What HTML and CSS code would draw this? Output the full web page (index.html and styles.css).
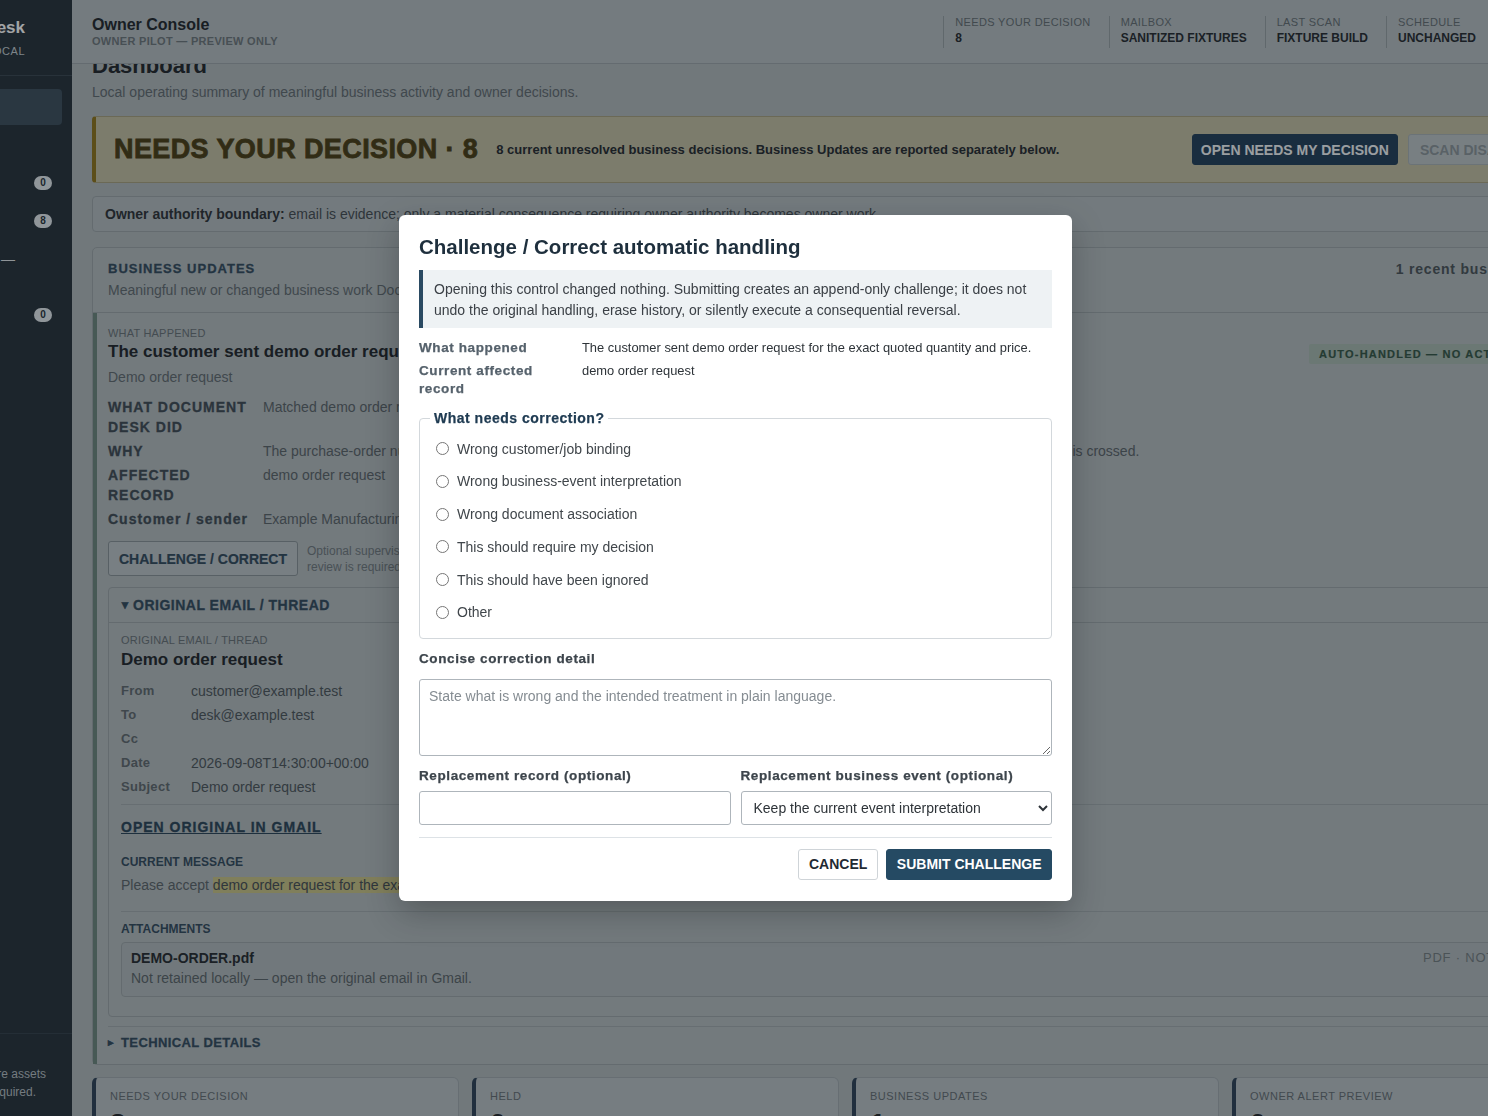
FILE: index.html
```html
<!DOCTYPE html>
<html lang="en">
<head>
<meta charset="utf-8">
<title>Owner Console — Dashboard</title>
<link rel="stylesheet" href="styles.css">
</head>
<body>
<div class="app">
  <aside class="sidebar">
    <div class="sidebar-inner">
      <div class="brand">
        <div class="brand-name">Document Desk</div>
        <div class="brand-sub">Owner pilot · local</div>
      </div>
      <nav class="nav">
        <a class="nav-item active"><span>Dashboard</span></a>
        <a class="nav-item"><span>Business updates</span></a>
        <a class="nav-item"><span>Held</span><span class="badge">0</span></a>
        <a class="nav-item"><span>Needs my decision</span><span class="badge">8</span></a>
        <a class="nav-item"><span>Mailbox</span><span class="nav-dash">—</span></a>
        <a class="nav-item group-start"><span>Owner alerts</span><span class="badge">0</span></a>
      </nav>
      <div class="sidebar-foot">
        <span class="foot-line">Runs on sanitized fixture assets</span>
        <span class="foot-line foot-line-short">— no mailbox access is required.</span>
      </div>
    </div>
  </aside>

  <div class="main">
    <header class="topbar">
      <div class="topbar-title">
        <div class="app-title">Owner Console</div>
        <div class="app-sub">Owner pilot — preview only</div>
      </div>
      <dl class="stats">
        <div class="stat"><dt>Needs your decision</dt><dd>8</dd></div>
        <div class="stat"><dt>Mailbox</dt><dd>Sanitized fixtures</dd></div>
        <div class="stat"><dt>Last scan</dt><dd>Fixture build</dd></div>
        <div class="stat"><dt>Schedule</dt><dd>Unchanged</dd></div>
      </dl>
    </header>

    <div class="viewport">
      <div class="content">
        <h1 class="page-title">Dashboard</h1>
        <p class="page-desc">Local operating summary of meaningful business activity and owner decisions.</p>

        <section class="decision-banner">
          <h2 class="decision-title">NEEDS YOUR DECISION · 8</h2>
          <p class="decision-text">8 current unresolved business decisions. Business Updates are reported separately below.</p>
          <div class="decision-actions">
            <button class="btn btn-primary" type="button">OPEN NEEDS MY DECISION</button>
            <button class="btn btn-muted" type="button" disabled>SCAN DISABLED</button>
          </div>
        </section>

        <p class="boundary"><strong>Owner authority boundary:</strong> email is evidence; only a material consequence requiring owner authority becomes owner work.</p>

        <section class="card">
          <header class="card-head">
            <div>
              <h2 class="section-title">BUSINESS UPDATES</h2>
              <p class="section-sub">Meaningful new or changed business work Document Desk recorded since your last review. Nothing here needs your decision.</p>
            </div>
            <span class="card-count">1 recent business update</span>
          </header>

          <article class="update">
            <div class="update-head">
              <div>
                <div class="eyebrow">WHAT HAPPENED</div>
                <h3 class="update-title">The customer sent demo order request for the exact quoted quantity and price.</h3>
                <div class="update-sub">Demo order request</div>
              </div>
              <span class="pill">AUTO-HANDLED — NO ACTION NEEDED</span>
            </div>

            <dl class="facts">
              <dt>WHAT DOCUMENT DESK DID</dt>
              <dd>Matched demo order request to the accepted quotation and recorded the order.</dd>
              <dt>WHY</dt>
              <dd>The purchase-order number, quantity and price matched the accepted quote, so no owner decision is needed unless the threshold is crossed.</dd>
              <dt>AFFECTED RECORD</dt>
              <dd>demo order request</dd>
              <dt>Customer / sender</dt>
              <dd>Example Manufacturing Co. — customer@example.test</dd>
            </dl>

            <div class="update-actions">
              <button class="btn btn-outline" type="button">CHALLENGE / CORRECT</button>
              <p class="action-note">Optional supervisory check — this was handled automatically and no owner review is required for it.</p>
            </div>

            <details class="thread" open>
              <summary>ORIGINAL EMAIL / THREAD</summary>
              <div class="thread-body">
                <div class="eyebrow">ORIGINAL EMAIL / THREAD</div>
                <h4 class="thread-title">Demo order request</h4>
                <dl class="mail-headers">
                  <dt>From</dt><dd>customer@example.test</dd>
                  <dt>To</dt><dd>desk@example.test</dd>
                  <dt>Cc</dt><dd></dd>
                  <dt>Date</dt><dd>2026-09-08T14:30:00+00:00</dd>
                  <dt>Subject</dt><dd>Demo order request</dd>
                </dl>
                <div class="thread-link"><a href="#">OPEN ORIGINAL IN GMAIL</a></div>
                <div class="msg-label">CURRENT MESSAGE</div>
                <p class="msg">Please accept <mark>demo order request for the exact quoted quantity and price.</mark></p>
                <div class="attachments">
                  <div class="msg-label msg-label-tight">ATTACHMENTS</div>
                  <div class="attachment">
                    <div class="attachment-info">
                      <strong>DEMO-ORDER.pdf</strong>
                      <span>Not retained locally — open the original email in Gmail.</span>
                    </div>
                    <span class="attachment-meta">PDF · NOT CACHED</span>
                  </div>
                </div>
              </div>
            </details>

            <details class="tech">
              <summary>TECHNICAL DETAILS</summary>
            </details>
          </article>
        </section>

        <section class="summary-grid">
          <div class="summary-card"><div class="summary-label">NEEDS YOUR DECISION</div><div class="summary-value">8</div></div>
          <div class="summary-card"><div class="summary-label">HELD</div><div class="summary-value">0</div></div>
          <div class="summary-card"><div class="summary-label">BUSINESS UPDATES</div><div class="summary-value">1</div></div>
          <div class="summary-card"><div class="summary-label">OWNER ALERT PREVIEW</div><div class="summary-value">0</div></div>
        </section>
      </div>
    </div>
  </div>
</div>

<div class="backdrop">
  <div class="modal" role="dialog" aria-modal="true" aria-labelledby="modal-title">
    <h2 class="modal-title" id="modal-title">Challenge / Correct automatic handling</h2>
    <p class="modal-note">Opening this control changed nothing. Submitting creates an append-only challenge; it does not undo the original handling, erase history, or silently execute a consequential reversal.</p>
    <dl class="modal-facts">
      <dt>What happened</dt>
      <dd>The customer sent demo order request for the exact quoted quantity and price.</dd>
      <dt>Current affected record</dt>
      <dd>demo order request</dd>
    </dl>
    <fieldset class="choices">
      <legend>What needs correction?</legend>
      <label class="choice"><input type="radio" name="reason"> Wrong customer/job binding</label>
      <label class="choice"><input type="radio" name="reason"> Wrong business-event interpretation</label>
      <label class="choice"><input type="radio" name="reason"> Wrong document association</label>
      <label class="choice"><input type="radio" name="reason"> This should require my decision</label>
      <label class="choice"><input type="radio" name="reason"> This should have been ignored</label>
      <label class="choice"><input type="radio" name="reason"> Other</label>
    </fieldset>
    <label class="field-label field-label-first" for="detail">Concise correction detail</label>
    <textarea id="detail" class="textarea" placeholder="State what is wrong and the intended treatment in plain language."></textarea>
    <div class="field-row">
      <div class="field">
        <label class="field-label" for="record">Replacement record (optional)</label>
        <input id="record" class="input" type="text">
      </div>
      <div class="field">
        <label class="field-label" for="event">Replacement business event (optional)</label>
        <select id="event" class="input select">
          <option>Keep the current event interpretation</option>
        </select>
      </div>
    </div>
    <div class="modal-actions">
      <button class="btn btn-cancel" type="button">CANCEL</button>
      <button class="btn btn-submit" type="button">SUBMIT CHALLENGE</button>
    </div>
  </div>
</div>
</body>
</html>
```

FILE: styles.css
```css
* { box-sizing: border-box; }

html, body {
  margin: 0;
  height: 100%;
}

body {
  font-family: "Liberation Sans", Arial, sans-serif;
  font-size: 14px;
  color: #2e3338;
  background: #b0b8ba;
  overflow: hidden;
}

button, input, select, textarea {
  font-family: inherit;
}

.app {
  display: flex;
  height: 100vh;
  overflow: hidden;
}

/* ---------- sidebar ---------- */
.sidebar {
  flex: 0 0 72px;
  width: 72px;
  background: #27333b;
  overflow: hidden;
}

.sidebar-inner {
  width: 240px;
  margin-left: -168px;
  height: 100%;
  display: flex;
  flex-direction: column;
}

.brand {
  padding: 17px 47px 17px 18px;
  text-align: right;
  border-bottom: 1px solid #3a4852;
}

.brand-name {
  font-size: 17px;
  font-weight: bold;
  line-height: 22px;
  color: #ffffff;
}

.brand-sub {
  margin-top: 5px;
  font-size: 11px;
  line-height: 14px;
  letter-spacing: 0.5px;
  text-transform: uppercase;
  color: #c2cbd0;
}

.nav {
  display: flex;
  flex-direction: column;
  gap: 2px;
  padding: 13px 10px 0;
}

.nav-item {
  display: flex;
  align-items: center;
  justify-content: space-between;
  height: 36px;
  padding: 0 10px 0 12px;
  border-radius: 4px;
  color: #c8d1d6;
  font-size: 14px;
}

.nav-item.active { background: #3e4f5c; }
.nav-item.group-start { margin-top: 18px; }

.badge {
  min-width: 18px;
  height: 14px;
  padding: 0 5px;
  border-radius: 7px;
  background: #e3e9ec;
  color: #27333b;
  font-size: 10px;
  font-weight: bold;
  line-height: 14px;
  text-align: center;
}

.nav-dash {
  margin-right: 37px;
  color: #e0e6e9;
}

.sidebar-foot {
  margin-top: auto;
  border-top: 1px solid #35424b;
  padding: 31px 26px 15px 10px;
  text-align: right;
  font-size: 12px;
  line-height: 18px;
  color: #b5bdc1;
}

.foot-line { display: block; white-space: nowrap; }
.foot-line-short { padding-right: 10px; }

/* ---------- main ---------- */
.main {
  flex: 1 1 auto;
  min-width: 0;
  display: flex;
  flex-direction: column;
  overflow: hidden;
}

.topbar {
  flex: 0 0 64px;
  height: 64px;
  display: flex;
  justify-content: space-between;
  align-items: flex-start;
  padding: 15px 0 0 20px;
  background: #b5bdc0;
  border-bottom: 1px solid #9ba4a8;
}

.app-title {
  font-size: 16px;
  font-weight: bold;
  line-height: 20px;
  color: #22272c;
}

.app-sub {
  margin-top: -1px;
  font-size: 11px;
  font-weight: bold;
  letter-spacing: 0.3px;
  line-height: 14px;
  text-transform: uppercase;
  color: #6d767b;
}

.stats {
  display: flex;
  margin: 1px 0 0;
}

.stat {
  border-left: 1px solid #959ea2;
  padding: 0 18px 2px 11px;
}

.stat:last-child { padding-right: 12px; }

.stat dt {
  font-size: 11px;
  line-height: 13px;
  letter-spacing: 0.35px;
  text-transform: uppercase;
  color: #646d72;
}

.stat dd {
  margin: 1px 0 0;
  font-size: 12px;
  font-weight: bold;
  line-height: 16px;
  text-transform: uppercase;
  color: #262b30;
}

.viewport {
  flex: 1 1 auto;
  overflow: hidden;
}

.content {
  width: 1547px;
  padding: 0 20px;
  margin-top: -12px;
}

.page-title {
  margin: 0;
  font-size: 22px;
  line-height: 28px;
  font-weight: bold;
  color: #22272c;
}

.page-desc {
  margin: 2px 0 0;
  font-size: 14px;
  line-height: 20px;
  color: #626b70;
}

/* decision banner */
.decision-banner {
  margin-top: 14px;
  display: flex;
  align-items: center;
  padding: 15px 51px 15px 18px;
  background: #c2bea2;
  border: 1px solid #a7a07f;
  border-left: 4px solid #8f741c;
  border-radius: 4px;
}

.decision-title {
  margin: 0;
  font-size: 27px;
  line-height: 35px;
  font-weight: bold;
  letter-spacing: 0.4px;
  color: #4a3e16;
  -webkit-text-stroke: 0.8px #4a3e16;
  white-space: nowrap;
}

.decision-text {
  flex: 1 1 auto;
  margin: 0 0 0 18px;
  font-size: 13px;
  font-weight: bold;
  line-height: 18px;
  color: #262b30;
}

.decision-actions {
  display: flex;
  gap: 10px;
}

.btn {
  height: 31px;
  border-radius: 3px;
  font-size: 14px;
  font-weight: bold;
  white-space: nowrap;
  cursor: pointer;
}

.btn-primary {
  padding: 0 8px;
  background: #23405a;
  border: 1px solid #23405a;
  color: #f2f5f7;
}

.btn-muted {
  padding: 0 11px;
  background: #bcc4c6;
  border: 1px solid #a7b0b3;
  color: #8a9498;
}

.boundary {
  margin: 13px 0 0;
  padding: 7px 12px;
  line-height: 20px;
  font-size: 14px;
  color: #454d52;
  background: #b4bcbf;
  border: 1px solid #9ba4a7;
  border-radius: 4px;
}

.boundary strong { color: #2e3338; }

/* business updates card */
.card {
  margin-top: 15px;
  background: #b3bbbd;
  border: 1px solid #9ba4a7;
  border-radius: 5px;
}

.card-head {
  display: flex;
  justify-content: space-between;
  align-items: flex-start;
  padding: 12px 15px;
  border-bottom: 1px solid #9ba4a7;
}

.section-title {
  margin: 0;
  font-size: 13px;
  line-height: 18px;
  font-weight: bold;
  letter-spacing: 1px;
  color: #334b5d;
  -webkit-text-stroke: 0.3px #334b5d;
}

.section-sub {
  margin: 2px 0 0;
  font-size: 14px;
  line-height: 20px;
  color: #626b70;
}

.card-count {
  font-size: 14px;
  line-height: 18px;
  font-weight: bold;
  letter-spacing: 0.8px;
  color: #4b5459;
  white-space: nowrap;
}

.update {
  border-left: 4px solid #6c877d;
  padding: 13px 16px 11px 11px;
}

.update-head {
  display: flex;
  justify-content: space-between;
  align-items: flex-start;
}

.eyebrow {
  font-size: 11px;
  line-height: 14px;
  letter-spacing: 0.2px;
  color: #687176;
}

.update-title {
  margin: 1px 0 0;
  font-size: 17px;
  line-height: 22px;
  font-weight: bold;
  color: #22272c;
}

.update-sub {
  margin-top: 4px;
  font-size: 14px;
  line-height: 20px;
  color: #626b70;
}

.pill {
  margin-top: 18px;
  padding: 0 10px;
  height: 20px;
  line-height: 20px;
  background: #a7b8ae;
  color: #345646;
  font-size: 11px;
  font-weight: bold;
  letter-spacing: 1.2px;
  border-radius: 2px;
  white-space: nowrap;
  -webkit-text-stroke: 0.2px #345646;
}

.facts {
  display: grid;
  grid-template-columns: 143px 1fr;
  column-gap: 12px;
  row-gap: 4px;
  margin: 10px 0 0;
}

.facts dt {
  font-size: 14px;
  line-height: 20px;
  font-weight: bold;
  letter-spacing: 1px;
  color: #3f4b54;
  -webkit-text-stroke: 0.3px #3f4b54;
}

.facts dd {
  margin: 0;
  font-size: 14px;
  line-height: 20px;
  color: #5b6469;
}

.update-actions {
  display: flex;
  align-items: center;
  gap: 9px;
  margin-top: 12px;
}

.btn-outline {
  height: 35px;
  padding: 0 10px;
  background: #bcc4c7;
  border: 1px solid #889296;
  color: #334b5d;
  -webkit-text-stroke: 0.2px #334b5d;
}

.action-note {
  margin: 0;
  max-width: 415px;
  font-size: 12px;
  line-height: 16px;
  color: #70797e;
}

.thread {
  margin-top: 11px;
  border: 1px solid #9ba4a7;
  border-radius: 4px;
}

.thread > summary,
.tech > summary {
  display: block;
  list-style: none;
  cursor: pointer;
  font-weight: bold;
  color: #334b5d;
  -webkit-text-stroke: 0.3px #334b5d;
}

.thread > summary::-webkit-details-marker,
.tech > summary::-webkit-details-marker { display: none; }

.thread > summary {
  padding: 7px 10px;
  font-size: 14px;
  line-height: 20px;
  letter-spacing: 0.5px;
  border-bottom: 1px solid #9ba4a7;
}

.thread > summary::before {
  content: "▼";
  display: inline-block;
  width: 14px;
  font-size: 12px;
  vertical-align: 1px;
}

.thread-body {
  padding: 10px 12px 19px;
}

.thread-title {
  margin: 2px 0 0;
  font-size: 17px;
  line-height: 22px;
  font-weight: bold;
  color: #22272c;
}

.mail-headers {
  display: grid;
  grid-template-columns: 70px 1fr;
  margin: 8px 0 0;
  padding-bottom: 5px;
  border-bottom: 1px solid #a0a9ac;
}

.mail-headers dt {
  font-size: 13px;
  line-height: 24px;
  font-weight: bold;
  letter-spacing: 0.3px;
  color: #5f696e;
}

.mail-headers dd {
  margin: 0;
  font-size: 14px;
  line-height: 24px;
  color: #4d565b;
}

.thread-link {
  margin-top: 12px;
  line-height: 20px;
}

.thread-link a {
  font-size: 14px;
  font-weight: bold;
  letter-spacing: 1px;
  color: #2a4457;
  text-decoration: underline;
  -webkit-text-stroke: 0.3px #2a4457;
}

.msg-label {
  margin-top: 17px;
  font-size: 12px;
  line-height: 16px;
  font-weight: bold;
  color: #334b5d;
}

.msg-label-tight { margin-top: 0; }

.msg {
  margin: 5px 0 0;
  font-size: 14px;
  line-height: 20px;
  color: #5b6469;
}

.msg mark {
  background: #c9c386;
  color: #474f54;
}

.attachments {
  margin-top: 16px;
  border-top: 1px solid #a0a9ac;
  padding-top: 9px;
}

.attachment {
  margin-top: 5px;
  display: flex;
  justify-content: space-between;
  align-items: flex-start;
  padding: 5px 9px 8px;
  border: 1px solid #9ba4a7;
  border-radius: 4px;
  background: #b1b9bb;
}

.attachment-info strong {
  display: block;
  font-size: 14px;
  line-height: 20px;
  color: #262b30;
}

.attachment-info span {
  display: block;
  font-size: 14px;
  line-height: 20px;
  color: #5b6469;
}

.attachment-meta {
  font-size: 13px;
  line-height: 20px;
  letter-spacing: 0.8px;
  color: #737c80;
}

.tech {
  margin-top: 9px;
  border-top: 1px solid #a0a9ac;
  padding-top: 6px;
}

.tech > summary {
  font-size: 13px;
  line-height: 20px;
  letter-spacing: 0.4px;
}

.tech > summary::before {
  content: "▶";
  display: inline-block;
  width: 13px;
  font-size: 7px;
  vertical-align: 2px;
}

/* summary stats */
.summary-grid {
  margin-top: 12px;
  display: grid;
  grid-template-columns: repeat(4, 1fr);
  gap: 13px;
}

.summary-card {
  padding: 11px 14px 14px;
  background: #b8c0c4;
  border: 1px solid #a0a9ad;
  border-left: 4px solid #2f4358;
  border-radius: 6px;
}

.summary-label {
  font-size: 11px;
  line-height: 14px;
  letter-spacing: 0.5px;
  color: #646d72;
}

.summary-value {
  margin-top: 4px;
  font-size: 28px;
  line-height: 34px;
  font-weight: bold;
  color: #22272c;
}

/* ---------- modal ---------- */
.backdrop {
  position: fixed;
  inset: 0;
  background: rgba(10, 15, 20, 0.38);
  display: flex;
  align-items: center;
  justify-content: center;
  padding-right: 17px;
}

.modal {
  width: 673px;
  background: #ffffff;
  border-radius: 6px;
  padding: 20px 20px 21px;
  box-shadow: 0 12px 32px rgba(0, 0, 0, 0.25);
}

.modal-title {
  margin: 0;
  font-size: 20.5px;
  line-height: 24px;
  font-weight: bold;
  color: #1e2f3d;
}

.modal-note {
  margin: 11px 0 0;
  padding: 9px 14px 7px 11px;
  background: #eef2f4;
  border-left: 4px solid #2a4a62;
  font-size: 14px;
  line-height: 21px;
  color: #3b4046;
}

.modal-facts {
  display: grid;
  grid-template-columns: 150px 1fr;
  column-gap: 13px;
  row-gap: 5px;
  margin: 11px 0 0;
}

.modal-facts dt {
  font-size: 13.5px;
  line-height: 18px;
  font-weight: bold;
  letter-spacing: 0.6px;
  color: #56626c;
  -webkit-text-stroke: 0.25px #56626c;
}

.modal-facts dd {
  margin: 0;
  font-size: 12.9px;
  line-height: 18px;
  color: #2d3338;
}

.choices {
  margin: 11px 0 0;
  padding: 5px 14px 9px 10px;
  border: 1px solid #d3d8dc;
  border-radius: 4px;
}

.choices legend {
  padding: 0 4px;
  font-size: 14px;
  line-height: 18px;
  font-weight: bold;
  letter-spacing: 0.5px;
  color: #1f3b52;
  -webkit-text-stroke: 0.25px #1f3b52;
}

.choice {
  display: flex;
  align-items: center;
  gap: 8px;
  height: 32.7px;
  padding-left: 6px;
  font-size: 14px;
  color: #40464b;
}

.choice input {
  margin: 0;
  width: 13px;
  height: 13px;
}

.field-label {
  display: block;
  font-size: 13.5px;
  line-height: 18px;
  font-weight: bold;
  letter-spacing: 0.6px;
  color: #3d454c;
  -webkit-text-stroke: 0.25px #3d454c;
}

.field-label-first { margin-top: 11px; }

.textarea {
  display: block;
  width: 100%;
  height: 77px;
  margin-top: 11px;
  padding: 8px 9px;
  font-size: 14px;
  line-height: 16px;
  color: #2d3338;
  border: 1px solid #aeb5bb;
  border-radius: 3px;
}

.textarea::placeholder { color: #858c92; }

.field-row {
  display: grid;
  grid-template-columns: 1fr 1fr;
  gap: 10px;
  margin-top: 11px;
}

.input {
  display: block;
  width: 100%;
  height: 34px;
  margin-top: 6px;
  padding: 0 10px;
  font-size: 14px;
  color: #2d3338;
  background: #ffffff;
  border: 1px solid #aeb5bb;
  border-radius: 3px;
}

.select { padding: 0 8px; }

.modal-actions {
  display: flex;
  justify-content: flex-end;
  gap: 8px;
  margin-top: 12px;
  padding-top: 11px;
  border-top: 1px solid #dde2e6;
}

.btn-cancel {
  padding: 0 10px;
  background: #ffffff;
  border: 1px solid #cfd4d8;
  color: #1f2a33;
}

.btn-submit {
  padding: 0 9.5px;
  background: #254a63;
  border: 1px solid #254a63;
  color: #ffffff;
}
```
